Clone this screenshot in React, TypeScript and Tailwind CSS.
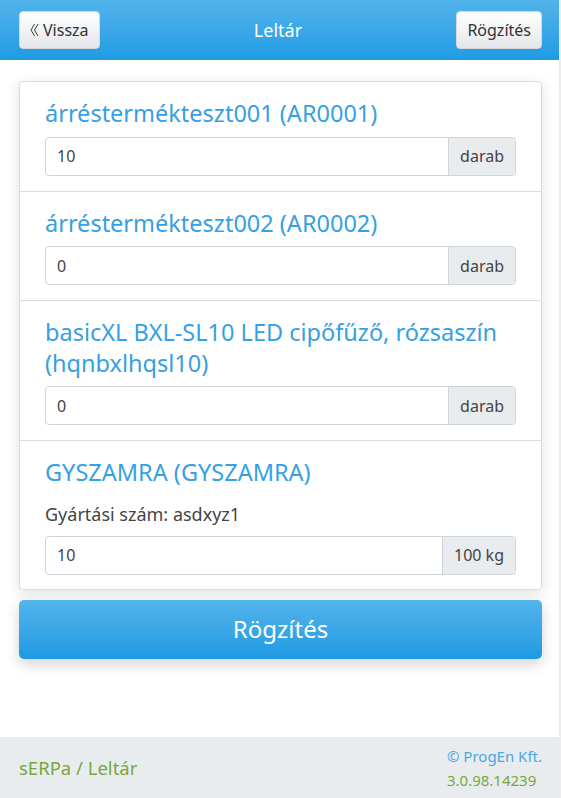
import * as React from "react";

interface Item {
  title: string;
  serial?: string;
  value: string;
  unit: string;
}

const items: Item[] = [
  { title: "árréstermékteszt001 (AR0001)", value: "10", unit: "darab" },
  { title: "árréstermékteszt002 (AR0002)", value: "0", unit: "darab" },
  { title: "basicXL BXL-SL10 LED cipőfűző, rózsaszín (hqnbxlhqsl10)", value: "0", unit: "darab" },
  { title: "GYSZAMRA (GYSZAMRA)", serial: "asdxyz1", value: "10", unit: "100 kg" },
];

const font = { fontFamily: '"Segoe UI", "Noto Sans", "Open Sans", sans-serif' };

const HeaderButton = ({ children }: { children: React.ReactNode }) => (
  <button className="h-[38px] px-[10px] flex items-center gap-1 rounded-[4px] border border-[#d6d9dc] bg-gradient-to-b from-white to-[#e4e7ea] text-[16px] text-[#333]">
    {children}
  </button>
);

export default function App() {
  return (
    <div className="min-h-[798px] flex flex-col bg-white text-[#333] border-r-2 border-[#ececec]" style={font}>
      {/* Header */}
      <header className="h-[60px] shrink-0 flex items-center justify-between pl-[19px] pr-[17px] bg-gradient-to-b from-[#51b4eb] to-[#1d9be4]">
        <HeaderButton>
          <svg width="9" height="16" viewBox="0 0 9 16" fill="none" stroke="#444" strokeWidth="1">
            <path d="M4.5 2 L1 8 L4.5 14" />
            <path d="M8 2 L4.5 8 L8 14" />
          </svg>
          <span>Vissza</span>
        </HeaderButton>
        <h1 className="text-[18px] text-white">Leltár</h1>
        <HeaderButton>Rögzítés</HeaderButton>
      </header>

      {/* Content */}
      <main className="flex-1 pl-[19px] pr-[17px] pt-[21px] pb-[40px]">
        <div className="rounded-[4px] border border-[#dcdcdc] bg-white shadow-[0_3px_14px_rgba(0,0,0,0.13)]">
          {items.map((item, i) => (
            <div
              key={i}
              className={
                "px-[25px] pt-[16px] " +
                (i < items.length - 1 ? "pb-[15px] border-b border-[#dcdcdc]" : "pb-[14px]")
              }
            >
              <h2 className="text-[23.5px] leading-[30.5px] text-[#35a0e3]">{item.title}</h2>
              {item.serial && (
                <p className="mt-[13px] text-[18px] leading-[27px] text-[#444]">Gyártási szám: {item.serial}</p>
              )}
              <div className="mt-[8px] flex h-[39px] rounded-[4px] border border-[#ced4da] overflow-hidden">
                <input
                  className="flex-1 min-w-0 px-[11px] text-[16px] text-[#444] outline-none"
                  defaultValue={item.value}
                />
                <span className="flex items-center px-[11px] border-l border-[#ced4da] bg-[#e9ecef] text-[16px] text-[#444]">
                  {item.unit}
                </span>
              </div>
            </div>
          ))}
        </div>

        <button className="mt-[10px] w-full h-[59px] rounded-[5px] bg-gradient-to-b from-[#52b4eb] to-[#1b9ae3] text-[24px] text-white shadow-[0_5px_14px_rgba(0,0,0,0.18)]">
          Rögzítés
        </button>
      </main>

      {/* Footer */}
      <footer className="h-[61px] shrink-0 flex items-center justify-between pl-[19px] pr-[17px] bg-[#e9ecef]">
        <span className="text-[18.5px] text-[#78a83c]">sERPa / Leltár</span>
        <div className="flex flex-col items-start text-[15px] leading-[24px]">
          <span className="text-[#4aa7e6]">© ProgEn Kft.</span>
          <span className="text-[#78a83c]">3.0.98.14239</span>
        </div>
      </footer>
    </div>
  );
}
